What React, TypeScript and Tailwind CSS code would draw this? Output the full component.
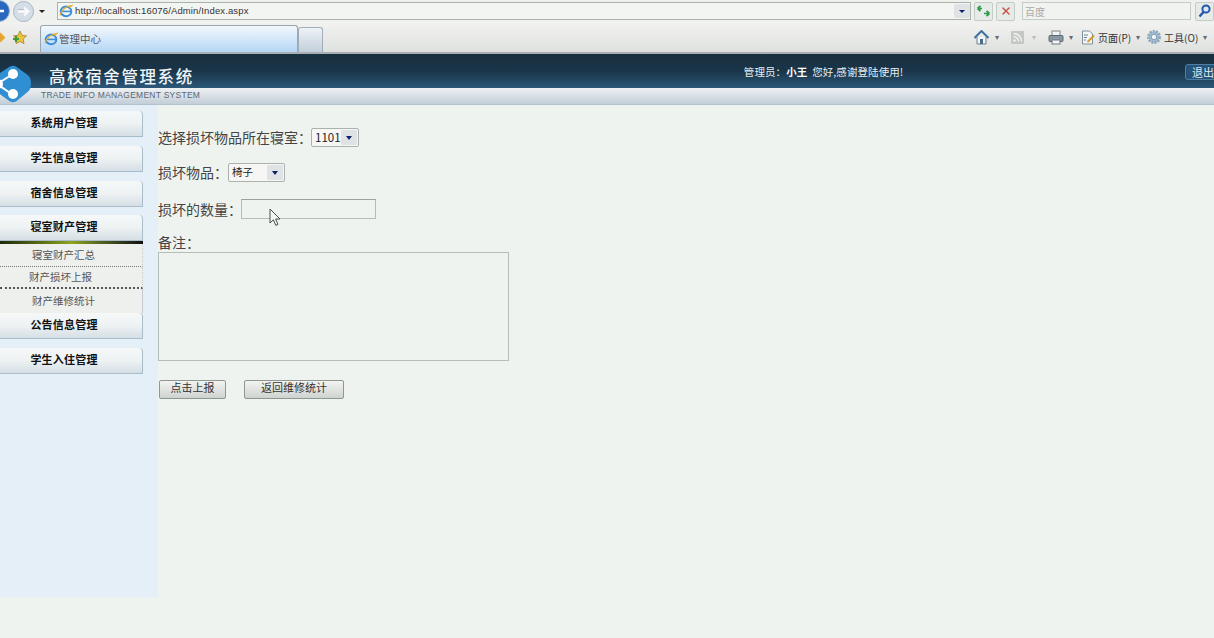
import React from 'react';
import { X } from 'lucide-react';

const cjk = { fontFamily: '"Noto Sans CJK SC", "Liberation Sans", sans-serif' };

const IeIcon = ({ size = 14 }: { size?: number }) => (
  <svg width={size} height={size} viewBox="0 0 16 16" className="shrink-0">
    <ellipse cx="8" cy="8.5" rx="6" ry="5.5" fill="none" stroke="#3a8fd8" strokeWidth="2.4" />
    <path d="M3 8.5h10" stroke="#3a8fd8" strokeWidth="1.8" />
    <path d="M1 13C3 6 9 2 15 1.5c-1 1-2 1.5-3 3" fill="none" stroke="#e8b030" strokeWidth="1.4" />
  </svg>
);

const Logo = () => (
  <svg width="34" height="38" viewBox="0 0 34 38" className="shrink-0">
    <path d="M13 1.5c2-1 4-1 6 0l11 8c3 2 4 5 4 9s-1 7-4 9l-11 9c-2 1-4 1-6 0L0 27V10Z" fill="#2f8fd2" />
    <path d="M0 19 16 9M0 19l16 11" stroke="#fff" strokeWidth="2" />
    <circle cx="16" cy="9" r="5" fill="#fff" />
    <circle cx="16" cy="29" r="5" fill="#fff" />
    <circle cx="1" cy="19" r="5" fill="#fff" />
  </svg>
);

const Cursor = () => (
  <svg width="12" height="19" viewBox="0 0 12 19" className="absolute left-[269px] top-[208px]">
    <path d="M1 1v14l3.4-3.2 2.4 5.6 2.2-1-2.4-5.4h4.4Z" fill="#f4f6f4" stroke="#4a4f4c" strokeWidth="1" />
  </svg>
);

const BackIcon = () => (
  <svg width="22" height="22" viewBox="0 0 22 22" className="shrink-0">
    <circle cx="11" cy="11" r="10.500" fill="#2a68bf" stroke="#9db6cf" />
    <path d="M16 11H7M10.500 7 6.500 11l4 4" fill="none" stroke="#fff" strokeWidth="2.400" />
  </svg>
);

const ForwardIcon = () => (
  <svg width="21" height="21" viewBox="0 0 21 21" className="shrink-0">
    <circle cx="10.500" cy="10.500" r="10" fill="#d5dee6" stroke="#a7b5c2" />
    <path d="M5 10.500h10M11 6.500l4.200 4-4.200 4" fill="none" stroke="#f7f9fa" strokeWidth="2.400" />
    <path d="M5 8.500h6" stroke="#9fb0be" strokeWidth="0.700" />
  </svg>
);

const RefreshIcon = () => (
  <svg width="15" height="13" viewBox="0 0 15 13">
    <path d="M6 3.5H1.5M1.5 3.5 4.5 1M1.5 3.5 4.5 6" fill="none" stroke="#2f9a46" strokeWidth="1.7" />
    <path d="M8 8.5h5.5M13.5 8.5l-3-2.5M13.5 8.5l-3 2.5" fill="none" stroke="#2f9a46" strokeWidth="1.7" />
  </svg>
);

const SearchIcon = () => (
  <svg width="13" height="14" viewBox="0 0 13 14">
    <circle cx="8" cy="5" r="3.6" fill="#d9e8f6" stroke="#2458ad" strokeWidth="2" />
    <path d="M5.5 8 1.5 12.5" stroke="#2458ad" strokeWidth="2.4" />
  </svg>
);

const FavoritesIcon = () => (
  <svg width="15" height="15" viewBox="0 0 15 15">
    <path d="M8 1l2 4.3 4.5.6-3.3 3.2.8 4.6L8 11.5l-4 2.2.8-4.6L1.500 5.900 6 5.300Z" fill="#e9c441" stroke="#a98424" strokeWidth="0.8" />
    <path d="M4 6v6M1 9h6" stroke="#3f9a37" strokeWidth="2.200" />
  </svg>
);

const HomeIcon = () => (
  <svg width="15" height="15" viewBox="0 0 15 15">
    <path d="M3 7v7h9V7" fill="#f2f5f7" stroke="#6c7f8c" />
    <path d="M0.500 8 7.500 1l7 7" fill="none" stroke="#3f6f9c" strokeWidth="2" />
    <rect x="6" y="9" width="3" height="5" fill="#4a6c8c" />
  </svg>
);

const FeedIcon = () => (
  <svg width="13" height="13" viewBox="0 0 13 13">
    <rect width="13" height="13" rx="1" fill="#c3c8c5" />
    <path d="M2.500 5.500a5 5 0 0 1 5 5M2.500 2.500a8 8 0 0 1 8 8" fill="none" stroke="#f0f2f0" strokeWidth="1.500" />
    <circle cx="3.500" cy="9.500" r="1.300" fill="#f0f2f0" />
  </svg>
);

const PrintIcon = () => (
  <svg width="16" height="15" viewBox="0 0 16 15">
    <rect x="4" y="1" width="8" height="5" fill="#f1f3f4" stroke="#7c8790" />
    <rect x="1" y="5.500" width="14" height="6" rx="1" fill="#8a98a3" stroke="#5c6972" />
    <rect x="4" y="10" width="8" height="4" fill="#f1f3f4" stroke="#6e7a83" />
  </svg>
);

const PageIcon = () => (
  <svg width="15" height="15" viewBox="0 0 15 15">
    <path d="M1.500 1h7l3 3v10h-10Z" fill="#f4f6f6" stroke="#7f8f9b" />
    <path d="M3 5h4M3 7.500h3M3 10h2" stroke="#6d8294" />
    <path d="M6.500 12 13 5.500" stroke="#d39b2b" strokeWidth="2" />
  </svg>
);

const GearIcon = () => (
  <svg width="16" height="16" viewBox="0 0 16 16">
    <circle cx="8" cy="8" r="5.500" fill="#a9c3d9" stroke="#8ca6bc" strokeWidth="3" strokeDasharray="2 1" />
    <circle cx="8" cy="8" r="2.800" fill="#eef3f6" stroke="#7c9ab4" />
  </svg>
);

const MenuButton = ({ label, className = '' }: { label: string; className?: string }) => (
  <div
    className={`h-[26px] w-[143px] flex items-center justify-center rounded-tr-sm border-r border-b border-[#a9bcc9] bg-gradient-to-b from-[#f6f8f8] via-[#eef2f3] to-[#d5dfe5] pb-[2px] pr-[14px] text-[11px] font-bold text-[#111] ${className}`}
  >
    <span className="tracking-[0.2px]">{label}</span>
  </div>
);

const SubItem = ({ label, className = '' }: { label: string; className?: string }) => (
  <div className={`w-[143px] flex items-center justify-center border-r border-[#c4ccd0] bg-[#eef0ee] text-[10.5px] text-[#555] ${className}`}>
    {label}
  </div>
);

const SelectBox = ({ value, className = '', textClass = '' }: { value: string; className?: string; textClass?: string }) => (
  <div className={`h-[19px] flex items-center justify-between rounded-[2px] border border-[#a9b2ac] bg-[#f6f7f5] pl-[3px] pr-[1px] ${className}`}>
    <span className={`leading-none text-[#222] ${textClass}`}>{value}</span>
    <span className="h-[15px] w-[16px] flex items-center justify-center rounded-[1px] bg-[#dfe3e6]">
      <span className="border-x-[3.5px] border-t-[4px] border-x-transparent border-t-[#10206a]" />
    </span>
  </div>
);

const AddressBar = () => (
  <div className="h-[22px] flex items-center bg-[#eef1ee] overflow-hidden">
    <div className="-ml-[12px] mr-[3px]">
      <BackIcon />
    </div>
    <ForwardIcon />
    <span className="ml-[5px] border-x-[3px] border-t-[3px] border-x-transparent border-t-[#222]" />
    <div className="ml-[12px] h-[18px] w-[914px] shrink-0 flex items-center border border-[#a9b3ab] bg-[#f3f5f2] pl-[1px]">
      <IeIcon />
      <span className="ml-[2px] text-[9.5px] tracking-[0.13px] text-[#333]" style={{ fontFamily: '"Liberation Sans", sans-serif' }}>
        http://localhost:16076/Admin/Index.aspx
      </span>
      <span className="ml-auto h-[14px] w-[16px] rounded-[2px] bg-[#dfe3e6] flex items-center justify-center">
        <span className="border-x-[3.5px] border-t-[3px] border-x-transparent border-t-[#10206a]" />
      </span>
    </div>
    <div className="ml-[3px] h-[19px] w-[19px] shrink-0 rounded-[2px] border border-[#c5ccc8] bg-[#e6ebe7] flex items-center justify-center">
      <RefreshIcon />
    </div>
    <div className="ml-[3px] h-[19px] w-[19px] shrink-0 rounded-[2px] border border-[#c5ccc8] bg-[#e6ebe7] flex items-center justify-center">
      <X size={12} strokeWidth={3} color="#c8534a" />
    </div>
    <div className="ml-[7px] h-[18px] w-[169px] shrink-0 flex items-center border border-[#c5ccc8] bg-[#f1f3f0] pl-[2px] text-[10px] text-[#aaa]">
      百度
    </div>
    <div className="ml-[4px] h-[19px] w-[19px] shrink-0 rounded-[2px] border border-[#c5ccc8] bg-[#e6ebe7] flex items-center justify-center">
      <SearchIcon />
    </div>
  </div>
);

const TabBar = () => (
  <div className="h-[32px] flex items-end border-b-2 border-[#a8aeb2] bg-gradient-to-b from-[#f2f3f1] to-[#dfe1df] text-[#333]">
    <div className="self-center -ml-[3px] h-[7px] w-[7px] rotate-45 bg-[#e5a731]" />
    <div className="self-center ml-[8px]">
      <FavoritesIcon />
    </div>
    <div className="ml-[13px] h-[27px] w-[258px] flex items-center rounded-t-[3px] border border-b-0 border-[#9aa7b0] bg-gradient-to-b from-[#f2f8fd] to-[#b5d6f5] pl-[3px]">
      <IeIcon />
      <span className="ml-[1px] text-[10.5px] text-[#555]">管理中心</span>
    </div>
    <div className="h-[25px] w-[25px] rounded-t-[3px] border border-b-0 border-[#a2adb6] bg-gradient-to-b from-[#eef2f6] to-[#c2cfdb]" />
    <div className="ml-[651px] flex items-center self-center text-[10px] whitespace-nowrap">
      <HomeIcon />
      <span className="ml-[6px] text-[8px] text-[#667]">▾</span>
      <span className="ml-[12px]"><FeedIcon /></span>
      <span className="ml-[8px] text-[8px] text-[#bbb]">▾</span>
      <span className="ml-[12px]"><PrintIcon /></span>
      <span className="ml-[5px] text-[8px] text-[#667]">▾</span>
      <span className="ml-[8px]"><PageIcon /></span>
      <span className="ml-[2px]">页面(P)</span>
      <span className="ml-[5px] text-[8px] text-[#667]">▾</span>
      <span className="ml-[6px]"><GearIcon /></span>
      <span className="ml-[2px]">工具(O)</span>
      <span className="ml-[5px] text-[8px] text-[#667]">▾</span>
    </div>
  </div>
);

const SiteHeader = () => (
  <div className="relative h-[51px] bg-[#e8edf0]">
    <div className="h-[34px] flex items-center whitespace-nowrap bg-gradient-to-b from-[#17303f] via-[#1a3549] to-[#2c5879]">
      <span className="ml-[49px] text-[16.5px] font-medium tracking-[1.6px] leading-none text-[#eef3f6] mt-[11px]">高校宿舍管理系统</span>
      <span className="ml-[550px] mt-[2px] text-[10.5px] tracking-[0.08px] text-[#e9eef1]">
        管理员：<b className="text-white">小王</b>&nbsp;&nbsp;您好,感谢登陆使用!
      </span>
      <span className="ml-auto -mr-[8px] mt-[2px] h-[16px] w-[37px] rounded-[3px] border border-[#4d7ea4] bg-[#265379] pl-[6px] text-[11px] leading-[14px] text-[#dfe9f0]">
        退出
      </span>
    </div>
    <div className="h-[17px] border-b border-[#b3c2cf] bg-gradient-to-b from-[#eef1f3] to-[#c3ced8] pl-[41px] pt-[1px] text-[8.5px] tracking-[0.26px] text-[#5a6670]" style={{ fontFamily: '"Liberation Sans", sans-serif' }}>
      TRADE INFO MANAGEMENT SYSTEM
    </div>
    <div className="absolute left-[-3px] top-[11px]">
      <Logo />
    </div>
  </div>
);

const Sidebar = () => (
  <div className="h-[492px] w-[158px] shrink-0 bg-[#e4eff8] pt-[6px]">
    <MenuButton label="系统用户管理" />
    <MenuButton label="学生信息管理" className="mt-[9px]" />
    <MenuButton label="宿舍信息管理" className="mt-[9px]" />
    <MenuButton label="寝室财产管理" className="mt-[8px]" />
    <div className="h-[3px] w-[143px] bg-gradient-to-r from-[#1f2a08] via-[#8ea51c] to-[#111]" />
    <SubItem label="寝室财产汇总" className="h-[23px] border-b border-dotted border-b-[#777] pr-[15px]" />
    <SubItem label="财产损坏上报" className="h-[22px] border-b-2 border-dotted border-b-[#555] pr-[21px]" />
    <SubItem label="财产维修统计" className="h-[24px] pr-[15px]" />
    <MenuButton label="公告信息管理" />
    <MenuButton label="学生入住管理" className="mt-[9px]" />
  </div>
);

const Form = () => (
  <div className="pt-[23px] text-[14px] text-[#444] whitespace-nowrap">
    <div className="h-[19px] flex items-center">
      <span className="w-[153px] shrink-0">选择损坏物品所在寝室：</span>
      <SelectBox value="1101" className="w-[48px]" textClass="text-[11.5px]" />
    </div>
    <div className="mt-[16px] h-[19px] flex items-center">
      <span className="w-[70px] shrink-0">损坏物品：</span>
      <SelectBox value="椅子" className="w-[57px] border-[#8d9691]" textClass="text-[10.5px]" />
    </div>
    <div className="mt-[17px] h-[20px] flex items-center">
      <span className="w-[83px] shrink-0">损坏的数量：</span>
      <div className="h-[20px] w-[135px] border border-[#b3bcb7] border-t-[#9aa39e]" />
    </div>
    <div className="mt-[13px] h-[20px] leading-[20px]">备注：</div>
    <div className="h-[109px] w-[351px] border border-[#b5bdb9]" />
    <div className="mt-[19px] ml-[1px] flex gap-[18px] text-[11px] text-[#333]">
      <div className="h-[19px] w-[67px] flex items-center justify-center rounded-[2px] border border-[#8f9792] bg-gradient-to-b from-[#f3f4f2] to-[#cfd3d0] pb-[4px]">点击上报</div>
      <div className="h-[19px] w-[100px] flex items-center justify-center rounded-[2px] border border-[#8f9792] bg-gradient-to-b from-[#f3f4f2] to-[#cfd3d0] pb-[5px]">返回维修统计</div>
    </div>
  </div>
);

export default function App() {
  return (
    <div className="relative h-[638px] w-[1214px] overflow-hidden bg-[#eff3ef]" style={cjk}>
      <AddressBar />
      <TabBar />
      <SiteHeader />
      <div className="flex">
        <Sidebar />
        <Form />
      </div>
      <Cursor />
    </div>
  );
}
